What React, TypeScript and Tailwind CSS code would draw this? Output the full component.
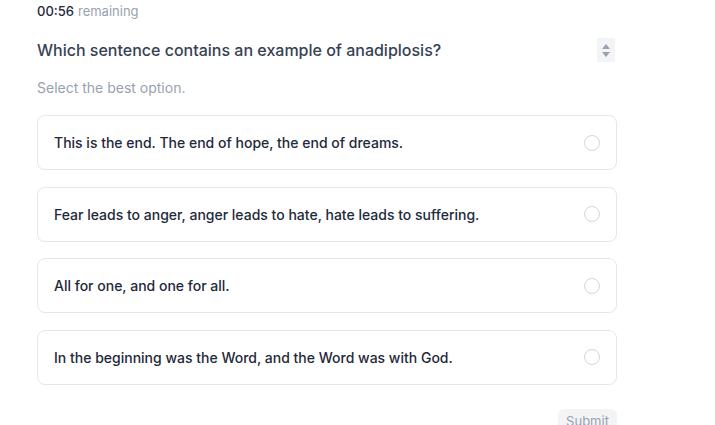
import React, { useState } from "react";

const options = [
  "This is the end. The end of hope, the end of dreams.",
  "Fear leads to anger, anger leads to hate, hate leads to suffering.",
  "All for one, and one for all.",
  "In the beginning was the Word, and the Word was with God.",
];

export default function App() {
  const [selected, setSelected] = useState<number | null>(null);

  return (
    <div
      className="min-h-screen bg-white"
      style={{ fontFamily: "Inter, 'Noto Sans', sans-serif" }}
    >
      <div className="ml-[37px] w-[580px] pt-[2px]">
        {/* Timer */}
        <div className="h-[20px] flex items-center text-[13px]">
          <span className="font-medium text-gray-800">00:56</span>
          <span className="ml-1 text-gray-400">remaining</span>
        </div>

        {/* Question */}
        <div className="mt-[16px] h-[24px] flex items-center justify-between">
          <h2 className="text-[16px] font-medium text-gray-700">
            Which sentence contains an example of anadiplosis?
          </h2>
          <div className="w-[18px] h-[24px] mr-[2px] bg-gray-100 flex flex-col items-center justify-center gap-[3px]">
            <svg width="8" height="5" viewBox="0 0 8 5">
              <path d="M4 0L8 5H0z" fill="#9ca3af" />
            </svg>
            <svg width="8" height="5" viewBox="0 0 8 5">
              <path d="M0 0H8L4 5z" fill="#9ca3af" />
            </svg>
          </div>
        </div>

        <p className="mt-[17px] h-[18px] leading-[18px] text-[14px] text-gray-400">
          Select the best option.
        </p>

        {/* Options */}
        <div className="mt-[18px] flex flex-col gap-[16.5px]">
          {options.map((opt, i) => (
            <button
              key={i}
              onClick={() => setSelected(i)}
              className="h-[55px] w-full flex items-center justify-between pl-[16px] pr-[16px] border border-gray-200 rounded-lg bg-white text-left"
            >
              <span className="text-[14px] font-medium text-gray-800">{opt}</span>
              <span
                className={
                  selected === i
                    ? "w-4 h-4 rounded-full border-[4px] border-gray-800"
                    : "w-4 h-4 rounded-full border border-gray-300"
                }
              />
            </button>
          ))}
        </div>

        {/* Submit */}
        <div className="mt-[24px] flex justify-end">
          <button
            disabled
            className="w-[59px] h-[30px] rounded-md bg-gray-100 text-[13px] leading-[16px] text-gray-400 flex items-start justify-center pt-[4px]"
          >
            Submit
          </button>
        </div>
      </div>
    </div>
  );
}
